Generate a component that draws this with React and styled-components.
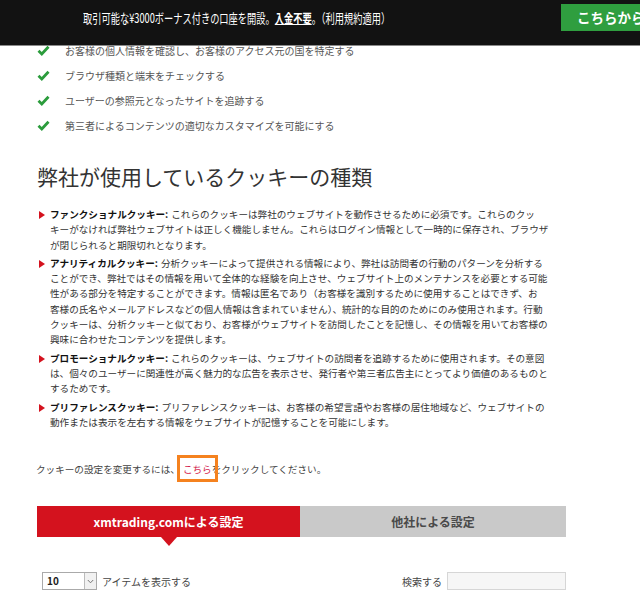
import React from "react";
import styled, { createGlobalStyle } from "styled-components";

const GlobalStyle = createGlobalStyle`
  html, body {
    margin: 0;
    padding: 0;
    background: #fff;
    overflow: hidden;
  }
  body {
    font-family: "Noto Sans CJK JP", "Noto Sans", sans-serif;
    color: #333;
  }
`;

const Banner = styled.div`
  position: fixed;
  top: 0;
  left: 0;
  right: 0;
  height: 46px;
  background: #121212;
  border-bottom: 1px solid #8a8a8a;
  display: flex;
  align-items: flex-start;
  padding: 4px 0 0 83px;
  box-sizing: border-box;
  overflow: hidden;
  z-index: 10;
`;

const BannerText = styled.div`
  color: #fff;
  font-size: 13px;
  line-height: 27px;
  white-space: nowrap;
  transform: scaleX(0.71);
  transform-origin: left center;
  width: 310px;

  b {
    font-weight: 700;
    text-decoration: underline;
  }
`;

const BannerButton = styled.div`
  margin-left: auto;
  margin-right: -40px;
  flex-shrink: 0;
  width: 119px;
  height: 27px;
  background: #2f9e3f;
  color: #fff;
  font-weight: 700;
  font-size: 13.5px;
  line-height: 27px;
  padding-left: 16px;
  box-sizing: border-box;
  white-space: nowrap;
`;

const Page = styled.div`
  width: 530px;
  padding: 38px 0 0 36px;
`;

const CheckList = styled.ul`
  list-style: none;
  margin: 0;
  padding: 0;
`;

const CheckItem = styled.li`
  display: flex;
  align-items: center;
  height: 25px;
  font-size: 10px;
  color: #555;
  gap: 15px;
  padding-left: 1px;
`;

const Heading = styled.h2`
  margin: 23px 0 0 1px;
  font-size: 21px;
  font-weight: 400;
  line-height: 30px;
  color: #333;
`;

const TypeList = styled.ul`
  list-style: none;
  margin: 16px 0 0;
  padding: 0;
  width: 540px;
`;

const TypeItem = styled.li`
  display: flex;
  font-size: 9.6px;
  line-height: 15.3px;
  color: #333;
  margin-bottom: 3px;
`;

const Marker = styled.span`
  flex-shrink: 0;
  width: 14px;
  padding-left: 3px;
  box-sizing: border-box;

  &::before {
    content: "";
    display: inline-block;
    border-left: 6px solid #d4121e;
    border-top: 4.5px solid transparent;
    border-bottom: 4.5px solid transparent;
    vertical-align: -1px;
  }
`;

const Body = styled.div`
  white-space: nowrap;
`;

const Term = styled.b`
  font-weight: 700;
  color: #111;
  margin-right: 3px;
`;

const ChangeLine = styled.p`
  margin: 31px 0 0;
  font-size: 9.6px;
  line-height: 16px;
  color: #444;
`;

const Highlight = styled.span`
  position: relative;
  color: #d4244e;
  margin-left: 3px;

  &::after {
    content: "";
    position: absolute;
    left: -6px;
    right: -6px;
    top: -7px;
    bottom: -6px;
    border: 3px solid #f5821f;
  }
`;

const Tabs = styled.div`
  display: flex;
  margin: 29px 0 0 1px;
  width: 529px;
  height: 31px;
`;

const Tab = styled.div`
  position: relative;
  flex: ${(p) => (p.$active ? "0 0 263px" : "1")};
  background: ${(p) => (p.$active ? "#d4121e" : "#c9c9c9")};
  color: ${(p) => (p.$active ? "#fff" : "#4a4a4a")};
  font-size: 12px;
  font-weight: 700;
  display: flex;
  align-items: center;
  justify-content: center;

  &::after {
    content: "";
    display: ${(p) => (p.$active ? "block" : "none")};
    position: absolute;
    left: 50%;
    bottom: -9px;
    margin-left: -8px;
    border-top: 9px solid #d4121e;
    border-left: 8px solid transparent;
    border-right: 8px solid transparent;
  }
`;

const Controls = styled.div`
  display: flex;
  align-items: center;
  justify-content: space-between;
  margin: 35px 0 0 6px;
  width: 524px;
  font-size: 10px;
  color: #444;
`;

const Group = styled.div`
  display: flex;
  align-items: center;
  gap: 5px;
`;

const Select = styled.div`
  display: flex;
  width: 55px;
  height: 18px;
  border: 1px solid #aaa;
  box-sizing: border-box;
  background: #fff;
  font-size: 10px;
  font-weight: 700;
  color: #222;
`;

const SelectValue = styled.span`
  flex: 1;
  padding-left: 4px;
  line-height: 16px;
`;

const SelectArrow = styled.span`
  width: 11px;
  border-left: 1px solid #bbb;
  background: #f1f1f1;
  display: flex;
  align-items: center;
  justify-content: center;
`;

const SearchInput = styled.div`
  width: 119px;
  height: 18px;
  border: 1px solid #d6d6d6;
  background: #f6f6f6;
  box-sizing: border-box;
`;

const Check = () => (
  <svg width="13" height="11" viewBox="0 0 13 11">
    <path d="M1.5 5.8 L4.8 9 L11.5 1.8" fill="none" stroke="#2b9c3c" strokeWidth="2.8" />
  </svg>
);

const checks = [
  "お客様の個人情報を確認し、お客様のアクセス元の国を特定する",
  "ブラウザ種類と端末をチェックする",
  "ユーザーの参照元となったサイトを追跡する",
  "第三者によるコンテンツの適切なカスタマイズを可能にする",
];

// line breaks follow the reference page
const types = [
  {
    term: "ファンクショナルクッキー:",
    lines: [
      "これらのクッキーは弊社のウェブサイトを動作させるために必須です。これらのクッ",
      "キーがなければ弊社ウェブサイトは正しく機能しません。これらはログイン情報として一時的に保存され、ブラウザ",
      "が閉じられると期限切れとなります。",
    ],
  },
  {
    term: "アナリティカルクッキー:",
    lines: [
      "分析クッキーによって提供される情報により、弊社は訪問者の行動のパターンを分析する",
      "ことができ、弊社ではその情報を用いて全体的な経験を向上させ、ウェブサイト上のメンテナンスを必要とする可能",
      "性がある部分を特定することができます。情報は匿名であり（お客様を識別するために使用することはできず、お",
      "客様の氏名やメールアドレスなどの個人情報は含まれていません）、統計的な目的のためにのみ使用されます。行動",
      "クッキーは、分析クッキーと似ており、お客様がウェブサイトを訪問したことを記憶し、その情報を用いてお客様の",
      "興味に合わせたコンテンツを提供します。",
    ],
  },
  {
    term: "プロモーショナルクッキー:",
    lines: [
      "これらのクッキーは、ウェブサイトの訪問者を追跡するために使用されます。その意図",
      "は、個々のユーザーに関連性が高く魅力的な広告を表示させ、発行者や第三者広告主にとってより価値のあるものと",
      "するためです。",
    ],
  },
  {
    term: "プリファレンスクッキー:",
    lines: [
      "プリファレンスクッキーは、お客様の希望言語やお客様の居住地域など、ウェブサイトの",
      "動作または表示を左右する情報をウェブサイトが記憶することを可能にします。",
    ],
  },
];

export default function App() {
  return (
    <>
      <GlobalStyle />
      <Banner>
        <BannerText>
          取引可能な¥3000ボーナス付きの口座を開設。<b>入金不要</b>。（利用規約適用）
        </BannerText>
        <BannerButton>こちらから</BannerButton>
      </Banner>
      <Page>
        <CheckList>
          {checks.map((c) => (
            <CheckItem key={c}>
              <Check />
              <span>{c}</span>
            </CheckItem>
          ))}
        </CheckList>
        <Heading>弊社が使用しているクッキーの種類</Heading>
        <TypeList>
          {types.map((t) => (
            <TypeItem key={t.term}>
              <Marker />
              <Body>
                <Term>{t.term}</Term>
                {t.lines.map((l, i) => (
                  <React.Fragment key={i}>
                    {i > 0 && <br />}
                    {l}
                  </React.Fragment>
                ))}
              </Body>
            </TypeItem>
          ))}
        </TypeList>
        <ChangeLine>
          クッキーの設定を変更するには、<Highlight>こちら</Highlight>をクリックしてください。
        </ChangeLine>
        <Tabs>
          <Tab $active>xmtrading.comによる設定</Tab>
          <Tab>他社による設定</Tab>
        </Tabs>
        <Controls>
          <Group>
            <Select>
              <SelectValue>10</SelectValue>
              <SelectArrow>
                <svg width="7" height="5" viewBox="0 0 7 5">
                  <path d="M0.8 1 L3.5 3.8 L6.2 1" fill="none" stroke="#777" strokeWidth="1" />
                </svg>
              </SelectArrow>
            </Select>
            <span>アイテムを表示する</span>
          </Group>
          <Group>
            <span>検索する</span>
            <SearchInput />
          </Group>
        </Controls>
      </Page>
    </>
  );
}
